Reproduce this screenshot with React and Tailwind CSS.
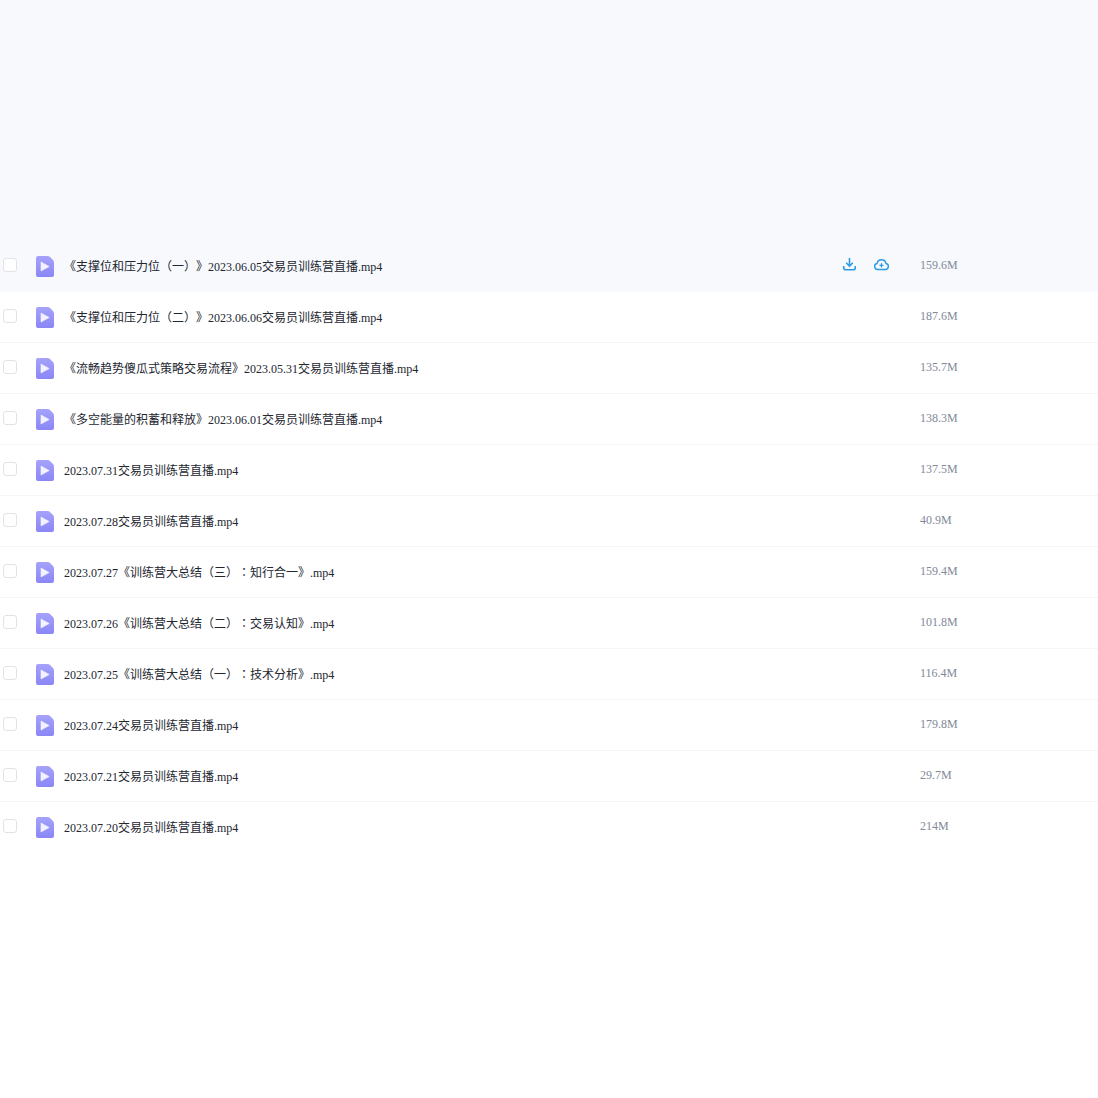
import { useState } from "react";

const files = [
  ["《支撑位和压力位（一）》2023.06.05交易员训练营直播.mp4", "159.6M"],
  ["《支撑位和压力位（二）》2023.06.06交易员训练营直播.mp4", "187.6M"],
  ["《流畅趋势傻瓜式策略交易流程》2023.05.31交易员训练营直播.mp4", "135.7M"],
  ["《多空能量的积蓄和释放》2023.06.01交易员训练营直播.mp4", "138.3M"],
  ["2023.07.31交易员训练营直播.mp4", "137.5M"],
  ["2023.07.28交易员训练营直播.mp4", "40.9M"],
  ["2023.07.27《训练营大总结（三）：知行合一》.mp4", "159.4M"],
  ["2023.07.26《训练营大总结（二）：交易认知》.mp4", "101.8M"],
  ["2023.07.25《训练营大总结（一）：技术分析》.mp4", "116.4M"],
  ["2023.07.24交易员训练营直播.mp4", "179.8M"],
  ["2023.07.21交易员训练营直播.mp4", "29.7M"],
  ["2023.07.20交易员训练营直播.mp4", "214M"],
];

function VideoIcon({ id }) {
  return (
    <svg width="18" height="21" viewBox="0 0 18 21">
      <defs>
        <linearGradient id={id} x1="0" y1="0" x2="0" y2="1">
          <stop offset="0" stopColor="#a6a2fb" />
          <stop offset="1" stopColor="#8a86f6" />
        </linearGradient>
      </defs>
      <path
        d="M2 0H11.5Q13 0 14 1L17 4Q18 5 18 6.5V19a2 2 0 0 1-2 2H2a2 2 0 0 1-2-2V2a2 2 0 0 1 2-2z"
        fill={`url(#${id})`}
      />
      <path d="M5 6L13.2 10.5L5 15z" fill="#f3f2ff" stroke="#f3f2ff" strokeWidth="0.6" strokeLinejoin="round" />
    </svg>
  );
}

function DownloadIcon() {
  return (
    <svg width="14" height="14" viewBox="-1 0 14 14" fill="none" stroke="#2b9be8" strokeWidth="1.6">
      <path d="M6.5 1V9M3.2 5.8L6.5 9.2L9.8 5.8" />
      <path d="M0.7 9V10.8A2 2 0 0 0 2.7 12.8H10.3A2 2 0 0 0 12.3 10.8V9" />
    </svg>
  );
}

function CloudIcon() {
  return (
    <svg width="15" height="14" viewBox="0 0 15 14" fill="none" stroke="#2b9be8" strokeWidth="1.5">
      <path d="M4 12.5A3.1 3.1 0 0 1 3 6.4A4.6 4.6 0 0 1 12 6.4A3.1 3.1 0 0 1 11 12.5z" />
      <path d="M7.5 6.2V10.4M5.5 8.3H9.5" strokeWidth="1.3" />
    </svg>
  );
}

// the reference has its full-width colon vertically centred, as the TC face draws it
function FileName({ name }) {
  const parts = name.split("：");
  return parts.map((part, i) => (
    <span key={i}>
      {i > 0 && <span className="font-['Noto_Sans_CJK_TC',sans-serif] leading-none">：</span>}
      {part}
    </span>
  ));
}

function FileRow({ name, size, active, index }) {
  return (
    <div
      className={`flex h-[51px] items-center border-b last:border-transparent ${
        active ? "border-[#f7f9fd] bg-[#f7f9fd]" : "border-[#f6f6f8] bg-white"
      }`}
    >
      <span className="mb-[2px] ml-[3px] h-[14px] w-[14px] shrink-0 rounded-[3px] border border-[#e1e3e8] bg-white" />
      <span className="ml-[19px] mt-[1px] flex h-[21px] w-[18px] shrink-0">
        <VideoIcon id={`video-${index}`} />
      </span>
      <span className="ml-[10px] mt-[2px] min-w-0 flex-1 text-xs whitespace-nowrap text-[#22262f] [text-spacing-trim:space-all]">
        <FileName name={name} />
      </span>
      {active && (
        <div className="mb-[4px] flex items-center gap-[18px]">
          <DownloadIcon />
          <CloudIcon />
        </div>
      )}
      <span className="mb-[2px] ml-[31px] w-[178px] shrink-0 text-xs text-[#818999]">{size}</span>
    </div>
  );
}

export default function App() {
  const [hovered] = useState(0);

  return (
    <main className="min-h-[1098px] w-full bg-white font-['Liberation_Serif','Noto_Sans_CJK_SC',serif]">
      <div className="h-[241px] bg-[#f7f9fd]" />
      {files.map(([name, size], i) => (
        <FileRow key={name} name={name} size={size} index={i} active={i === hovered} />
      ))}
    </main>
  );
}
